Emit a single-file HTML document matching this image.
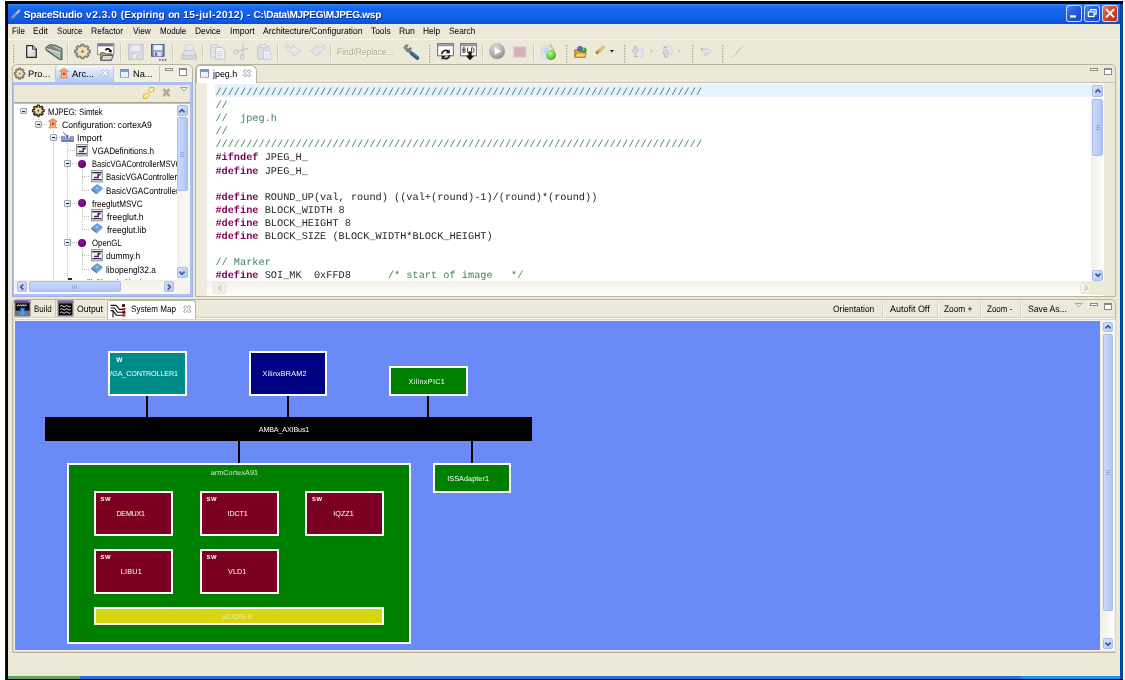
<!DOCTYPE html>
<html><head><meta charset="utf-8"><title>SpaceStudio</title>
<style>
*{box-sizing:border-box;margin:0;padding:0}
html,body{width:1125px;height:680px;overflow:hidden;background:#fff}
body{position:relative;font-family:"Liberation Sans",sans-serif;font-size:8.2px;color:#000;text-rendering:geometricPrecision}
#root{position:absolute;left:0;top:0;width:1125px;height:680px;will-change:transform}
.a{position:absolute}
.t{position:absolute;white-space:pre;line-height:12px;height:12px;transform-origin:0 50%;}
.code{position:absolute;left:215.4px;white-space:pre;font-family:"Liberation Mono",monospace;font-size:10.27px;line-height:13.13px;height:13.13px;color:#262626}
.c{color:#3f7f5f}
.k{color:#7f0055;font-weight:bold}
.bx{position:absolute;border:2px solid #fff}
svg{position:absolute;overflow:visible}
</style></head>
<body><div id="root">
<div class="a" style="left:5px;top:1px;width:1118px;height:679px;background:#000;"></div>
<div class="a" style="left:5px;top:4px;width:1px;height:676px;background:#02285c;"></div>
<div class="a" style="left:1120px;top:4px;width:3px;height:675px;background:#0046a8;"></div>
<div class="a" style="left:8px;top:4px;width:1112px;height:672px;background:#ece9d8;"></div>
<div class="a" style="left:8px;top:676px;width:72px;height:3px;background:#5aa85a;"></div>
<div class="a" style="left:80px;top:676px;width:941px;height:3px;background:#2a6fe0;"></div>
<div class="a" style="left:1021px;top:676px;width:99px;height:3px;background:#1d95e8;"></div>
<div class="a" style="left:8px;top:4px;width:1112px;height:20px;background:linear-gradient(#3a88f2 0%,#1e6ff0 12%,#1463ec 30%,#1261ea 60%,#0f5ae2 82%,#0b4fd2 100%);"></div>
<div class="a" style="left:0;top:0;width:0;height:0;white-space:pre">
<span class="t" style="left:23.75px;top:10.2px;font-size:10.1px;letter-spacing:-0.225px;color:#fff;font-weight:bold;text-shadow:0.7px 0.7px 0 #0a2a80;-webkit-text-stroke:0;">SpaceStudio</span> <span class="t" style="left:86.05px;top:10.2px;font-size:10.1px;letter-spacing:0.537px;color:#fff;font-weight:bold;text-shadow:0.7px 0.7px 0 #0a2a80;-webkit-text-stroke:0;">v2.3.0</span> <span class="t" style="left:120.85px;top:10.2px;font-size:10.1px;letter-spacing:0.003px;color:#fff;font-weight:bold;text-shadow:0.7px 0.7px 0 #0a2a80;-webkit-text-stroke:0;">(Expiring</span> <span class="t" style="left:168.35px;top:10.2px;font-size:10.1px;letter-spacing:-0.820px;color:#fff;font-weight:bold;text-shadow:0.7px 0.7px 0 #0a2a80;-webkit-text-stroke:0;">on</span> <span class="t" style="left:183.35px;top:10.2px;font-size:10.1px;letter-spacing:0.402px;color:#fff;font-weight:bold;text-shadow:0.7px 0.7px 0 #0a2a80;-webkit-text-stroke:0;">15-jul-2012)</span> <span class="t" style="left:247.05px;top:10.2px;font-size:10.1px;letter-spacing:0.537px;color:#fff;font-weight:bold;text-shadow:0.7px 0.7px 0 #0a2a80;-webkit-text-stroke:0;">-</span> <span class="t" style="left:253.55px;top:10.2px;font-size:10.1px;letter-spacing:-0.284px;color:#fff;font-weight:bold;text-shadow:0.7px 0.7px 0 #0a2a80;-webkit-text-stroke:0;">C:\Data\MJPEG\MJPEG.wsp</span> </div>
<div class="a" style="left:1066.3px;top:5.3px;width:16.2px;height:16.4px;border:1px solid rgba(225,235,252,0.85);border-radius:3px;background:linear-gradient(135deg,#4d8cf5 0%,#2a62e0 35%,#1f52d4 70%,#1a45b8 100%)"></div>
<div class="a" style="left:1084.2px;top:5.3px;width:16.2px;height:16.4px;border:1px solid rgba(225,235,252,0.85);border-radius:3px;background:linear-gradient(135deg,#4d8cf5 0%,#2a62e0 35%,#1f52d4 70%,#1a45b8 100%)"></div>
<div class="a" style="left:1102.1px;top:5.3px;width:16.2px;height:16.4px;border:1px solid rgba(225,235,252,0.85);border-radius:3px;background:linear-gradient(135deg,#e9866a 0%,#dc5030 35%,#cf3a1c 70%,#b52c10 100%)"></div>
<svg style="left:1066.3px;top:5.3px" width="16.2" height="16.4"><rect x="4" y="10.3" width="6" height="2.2" fill="#fff"/></svg>
<svg style="left:1084.2px;top:5.3px" width="16.2" height="16.4"><g fill="none" stroke="#fff" stroke-width="1.2"><path d="M6.5 6.3V4.6h5.6v4.6h-1.8"/><rect x="4.3" y="6.9" width="5.8" height="4.6"/></g></svg>
<svg style="left:1102.1px;top:5.3px" width="16.2" height="16.4"><g stroke="#fff" stroke-width="1.9" stroke-linecap="round"><path d="M4.6 4.6l7 7.2M11.6 4.6l-7 7.2"/></g></svg>
<svg style="left:11px;top:8.6px" width="10" height="10"><g stroke-linecap="round"><path d="M1.600 8.200L8.200 1.600" stroke="#9aa3c8" stroke-width="2.600"/><path d="M1.400 8.200L4 5.600" stroke="#7c86ad" stroke-width="1.400"/><path d="M5.600 4.200L8.400 1.400" stroke="#c9cfe6" stroke-width="1.400"/><path d="M4 3.200L6.800 6" stroke="#6f7aa6" stroke-width="0.900"/></g></svg>
<div class="t" style="left:11.85px;top:25px;font-size:9.3px;transform:scaleX(0.8608);">File</div>
<div class="t" style="left:33.45px;top:25px;font-size:9.3px;transform:scaleX(0.9173);">Edit</div>
<div class="t" style="left:56.95px;top:25px;font-size:9.3px;transform:scaleX(0.8688);">Source</div>
<div class="t" style="left:91.45px;top:25px;font-size:9.3px;transform:scaleX(0.9161);">Refactor</div>
<div class="t" style="left:132.95px;top:25px;font-size:9.3px;transform:scaleX(0.8905);">View</div>
<div class="t" style="left:159.65px;top:25px;font-size:9.3px;transform:scaleX(0.8622);">Module</div>
<div class="t" style="left:194.65px;top:25px;font-size:9.3px;transform:scaleX(0.9041);">Device</div>
<div class="t" style="left:229.55px;top:25px;font-size:9.3px;transform:scaleX(0.9372);">Import</div>
<div class="t" style="left:262.85px;top:25px;font-size:9.3px;transform:scaleX(0.9263);">Architecture/Configuration</div>
<div class="t" style="left:371.35px;top:25px;font-size:9.3px;transform:scaleX(0.9028);">Tools</div>
<div class="t" style="left:399.05px;top:25px;font-size:9.3px;transform:scaleX(0.9320);">Run</div>
<div class="t" style="left:423.05px;top:25px;font-size:9.3px;transform:scaleX(0.8993);">Help</div>
<div class="t" style="left:449.05px;top:25px;font-size:9.3px;transform:scaleX(0.8925);">Search</div>
<div class="a" style="left:8px;top:39px;width:1112px;height:1px;background:#f6f5ee;"></div>
<svg style="left:12.8px;top:44.6px" width="2" height="18" viewBox="0 0 2 18"><rect x="0" y="0.00" width="1.2" height="1.2" fill="#9a9787"/><rect x="0" y="2.70" width="1.2" height="1.2" fill="#9a9787"/><rect x="0" y="5.40" width="1.2" height="1.2" fill="#9a9787"/><rect x="0" y="8.10" width="1.2" height="1.2" fill="#9a9787"/><rect x="0" y="10.80" width="1.2" height="1.2" fill="#9a9787"/><rect x="0" y="13.50" width="1.2" height="1.2" fill="#9a9787"/><rect x="0" y="16.20" width="1.2" height="1.2" fill="#9a9787"/></svg>
<svg style="left:429.2px;top:44.6px" width="2" height="18" viewBox="0 0 2 18"><rect x="0" y="0.00" width="1.2" height="1.2" fill="#9a9787"/><rect x="0" y="2.70" width="1.2" height="1.2" fill="#9a9787"/><rect x="0" y="5.40" width="1.2" height="1.2" fill="#9a9787"/><rect x="0" y="8.10" width="1.2" height="1.2" fill="#9a9787"/><rect x="0" y="10.80" width="1.2" height="1.2" fill="#9a9787"/><rect x="0" y="13.50" width="1.2" height="1.2" fill="#9a9787"/><rect x="0" y="16.20" width="1.2" height="1.2" fill="#9a9787"/></svg>
<svg style="left:565.9px;top:44.6px" width="2" height="18" viewBox="0 0 2 18"><rect x="0" y="0.00" width="1.2" height="1.2" fill="#9a9787"/><rect x="0" y="2.70" width="1.2" height="1.2" fill="#9a9787"/><rect x="0" y="5.40" width="1.2" height="1.2" fill="#9a9787"/><rect x="0" y="8.10" width="1.2" height="1.2" fill="#9a9787"/><rect x="0" y="10.80" width="1.2" height="1.2" fill="#9a9787"/><rect x="0" y="13.50" width="1.2" height="1.2" fill="#9a9787"/><rect x="0" y="16.20" width="1.2" height="1.2" fill="#9a9787"/></svg>
<svg style="left:623.8px;top:44.6px" width="2" height="18" viewBox="0 0 2 18"><rect x="0" y="0.00" width="1.2" height="1.2" fill="#9a9787"/><rect x="0" y="2.70" width="1.2" height="1.2" fill="#9a9787"/><rect x="0" y="5.40" width="1.2" height="1.2" fill="#9a9787"/><rect x="0" y="8.10" width="1.2" height="1.2" fill="#9a9787"/><rect x="0" y="10.80" width="1.2" height="1.2" fill="#9a9787"/><rect x="0" y="13.50" width="1.2" height="1.2" fill="#9a9787"/><rect x="0" y="16.20" width="1.2" height="1.2" fill="#9a9787"/></svg>
<svg style="left:691.9px;top:44.6px" width="2" height="18" viewBox="0 0 2 18"><rect x="0" y="0.00" width="1.2" height="1.2" fill="#9a9787"/><rect x="0" y="2.70" width="1.2" height="1.2" fill="#9a9787"/><rect x="0" y="5.40" width="1.2" height="1.2" fill="#9a9787"/><rect x="0" y="8.10" width="1.2" height="1.2" fill="#9a9787"/><rect x="0" y="10.80" width="1.2" height="1.2" fill="#9a9787"/><rect x="0" y="13.50" width="1.2" height="1.2" fill="#9a9787"/><rect x="0" y="16.20" width="1.2" height="1.2" fill="#9a9787"/></svg>
<svg style="left:721.9px;top:44.6px" width="2" height="18" viewBox="0 0 2 18"><rect x="0" y="0.00" width="1.2" height="1.2" fill="#9a9787"/><rect x="0" y="2.70" width="1.2" height="1.2" fill="#9a9787"/><rect x="0" y="5.40" width="1.2" height="1.2" fill="#9a9787"/><rect x="0" y="8.10" width="1.2" height="1.2" fill="#9a9787"/><rect x="0" y="10.80" width="1.2" height="1.2" fill="#9a9787"/><rect x="0" y="13.50" width="1.2" height="1.2" fill="#9a9787"/><rect x="0" y="16.20" width="1.2" height="1.2" fill="#9a9787"/></svg>
<div class="a" style="left:66.80000000000001px;top:42.5px;width:1px;height:19px;background:#d0ccba;"></div>
<div class="a" style="left:67.80000000000001px;top:42.5px;width:1px;height:19px;background:#f5f4ec;"></div>
<div class="a" style="left:119.80000000000001px;top:42.5px;width:1px;height:19px;background:#d0ccba;"></div>
<div class="a" style="left:120.80000000000001px;top:42.5px;width:1px;height:19px;background:#f5f4ec;"></div>
<div class="a" style="left:171.8px;top:42.5px;width:1px;height:19px;background:#d0ccba;"></div>
<div class="a" style="left:172.8px;top:42.5px;width:1px;height:19px;background:#f5f4ec;"></div>
<div class="a" style="left:201.8px;top:42.5px;width:1px;height:19px;background:#d0ccba;"></div>
<div class="a" style="left:202.8px;top:42.5px;width:1px;height:19px;background:#f5f4ec;"></div>
<div class="a" style="left:276.9px;top:42.5px;width:1px;height:19px;background:#d0ccba;"></div>
<div class="a" style="left:277.9px;top:42.5px;width:1px;height:19px;background:#f5f4ec;"></div>
<div class="a" style="left:329.7px;top:42.5px;width:1px;height:19px;background:#d0ccba;"></div>
<div class="a" style="left:330.7px;top:42.5px;width:1px;height:19px;background:#f5f4ec;"></div>
<div class="a" style="left:481.79999999999995px;top:42.5px;width:1px;height:19px;background:#d0ccba;"></div>
<div class="a" style="left:482.79999999999995px;top:42.5px;width:1px;height:19px;background:#f5f4ec;"></div>
<div class="a" style="left:532.8px;top:42.5px;width:1px;height:19px;background:#d0ccba;"></div>
<div class="a" style="left:533.8px;top:42.5px;width:1px;height:19px;background:#f5f4ec;"></div>
<svg style="left:25.6px;top:44.6px" width="11" height="13.4" viewBox="0 0 11 13.4"><defs><linearGradient id="gnew" x1="0" y1="0" x2="1" y2="1"><stop offset="0" stop-color="#fff"/><stop offset="1" stop-color="#c9c9cf"/></linearGradient></defs><path d="M0.7 0.7H6.6L10.3 4.2V12.4H0.7Z" fill="url(#gnew)" stroke="#2b2b33" stroke-width="1.3" stroke-linejoin="round"/><path d="M6.6 0.7V4.2H10.3" fill="#e6e6ea" stroke="#2b2b33" stroke-width="1"/></svg>
<svg style="left:44.6px;top:43.6px" width="17.6" height="16.2" viewBox="0 0 17.6 16.2"><path d="M0.900 4.400Q0.600 3.400 1.600 3L5.200 0.800Q6 0.400 6.800 0.800L8.400 1.600L9.600 1L16.400 4.200Q17 4.600 17 5.400V14.800Q17 15.800 16 15.600L14.400 15.200L1.600 6.200Q1 5.600 0.900 4.400Z" fill="#a9c7b0" stroke="#4a574d" stroke-width="1.100" stroke-linejoin="round"/><path d="M2 3.600L6 1.600L16 6.400V8.200L2.400 4.800Z" fill="#877f8c"/><path d="M2.400 5L15.600 9" fill="none" stroke="#dfeee2" stroke-width="0.900"/><path d="M15.800 8.600V14.800" stroke="#6d8473" stroke-width="1.300"/></svg>
<svg style="left:74.3px;top:44.1px" width="17" height="15" viewBox="0 0 17 15"><defs><radialGradient id="ggear" cx="0.5" cy="0.5" r="0.5"><stop offset="0" stop-color="#f6d25c"/><stop offset="0.32" stop-color="#f3dc8c"/><stop offset="0.5" stop-color="#ebe6d4"/><stop offset="1" stop-color="#dad6c6"/></radialGradient></defs><polygon points="7.20,0.70 9.80,0.70 10.12,2.32 11.45,2.81 12.95,1.87 14.79,3.52 13.73,4.86 14.28,6.05 16.09,6.33 16.09,8.67 14.28,8.95 13.73,10.14 14.79,11.48 12.95,13.13 11.45,12.19 10.12,12.68 9.80,14.30 7.20,14.30 6.88,12.68 5.55,12.19 4.05,13.13 2.21,11.48 3.27,10.14 2.72,8.95 0.91,8.67 0.91,6.33 2.72,6.05 3.27,4.86 2.21,3.52 4.05,1.87 5.55,2.81 6.88,2.32" fill="url(#ggear)" stroke="#878372" stroke-width="1.700" stroke-linejoin="round"/><circle cx="8.500" cy="7.500" r="1" fill="#5b4a25"/></svg>
<svg style="left:97.4px;top:42.8px" width="17.6" height="18" viewBox="0 0 17.6 18"><rect x="0.600" y="0.600" width="16.200" height="10.800" fill="#fff" stroke="#8d8d95" stroke-width="1.100"/><rect x="1.100" y="1.100" width="15.200" height="2.200" fill="#7d6c9a"/><path d="M7.800 6.800c1.400-2.600 5-2.600 6 0.400l1.400-0.400l-1 3l-3-1.600l1.200-0.400c-0.800-1.600-2.400-1.400-3.200 0z" fill="#111"/><path d="M3.800 17.200V9.800h3.600l1 1.200h6v6.200z" fill="#cdb78a" stroke="#5e4e2c" stroke-width="1"/><path d="M3.800 17.200l2-4.800h10.400l-1.800 4.800z" fill="#d9d9de" stroke="#56505a" stroke-width="1"/></svg>
<svg style="left:128px;top:44.3px" width="15.6" height="16" viewBox="0 0 15.6 16"><rect x="0.6" y="0.6" width="14.4" height="14.8" fill="#dcdce4" stroke="#c3c3cf" stroke-width="1.1"/><rect x="3" y="1" width="9.4" height="6.4" fill="#eeeef3" stroke="#cfcfda" stroke-width="0.8"/><rect x="4" y="9.6" width="7.6" height="5.6" fill="#e9e9ef" stroke="#cbcbd6" stroke-width="0.8"/><rect x="8" y="11" width="2.2" height="3.4" fill="#d1d1da"/></svg>
<svg style="left:151px;top:44.3px" width="13.6" height="12.8" viewBox="0 0 13.6 12.8"><rect x="0.600" y="0.600" width="12.400" height="11.600" fill="#7f97cc" stroke="#3f55a0" stroke-width="1.100"/><rect x="2.400" y="1" width="8.800" height="5.200" fill="#f4f6fb" stroke="#a9b9dd" stroke-width="0.600"/><rect x="3" y="7.800" width="7.600" height="4.400" fill="#dfe5f2"/><rect x="4" y="8.600" width="2.200" height="3.200" fill="#4f6db2"/></svg>
<svg style="left:159px;top:58.6px" width="8" height="2" viewBox="0 0 8 2"><rect x="0.2" y="0.2" width="1.4" height="1.4" fill="#2b3d6a"/><rect x="3" y="0.2" width="1.4" height="1.4" fill="#2b3d6a"/><rect x="5.8" y="0.2" width="1.4" height="1.4" fill="#2b3d6a"/></svg>
<svg style="left:180.8px;top:44.3px" width="16.2" height="16" viewBox="0 0 16.2 16"><path d="M4.2 6.6V0.8h5.6l2.4 2.4v3.4z" fill="#f1f1f4" stroke="#c9c9d3" stroke-width="1"/><path d="M5.6 3h4M5.6 4.8h5" stroke="#d7d7df" stroke-width="0.8"/><path d="M1.4 11.4l2-4.8h9.6l2 4.8z" fill="#e3e3ea" stroke="#c6c6d0" stroke-width="1"/><rect x="0.8" y="11.2" width="14.6" height="4" fill="#d4d4dd" stroke="#c2c2cd" stroke-width="0.9"/></svg>
<svg style="left:210.2px;top:44.3px" width="15.8" height="16" viewBox="0 0 15.8 16"><path d="M0.8 0.8h6l2 2v10.4h-8z" fill="#ececf1" stroke="#c4c4cf" stroke-width="1"/><path d="M2 3.4h4M2 5.4h4M2 7.4h4M2 9.4h4" stroke="#d0d0da" stroke-width="0.8"/><path d="M5.6 3.4h6.6l2.6 2.6v9.2H5.6z" fill="#f3f3f6" stroke="#c4c4cf" stroke-width="1"/><path d="M7.2 7.4h5.8M7.2 9.4h5.8M7.2 11.4h5.8M7.2 13.2h4" stroke="#cfcfd9" stroke-width="0.8"/></svg>
<svg style="left:232.8px;top:44.3px" width="15.6" height="16" viewBox="0 0 15.6 16"><g fill="none" stroke="#c3c5cc" stroke-width="1.2"><circle cx="2.8" cy="8" r="2.2"/><ellipse cx="9.2" cy="13" rx="1.7" ry="2.4"/><path d="M4.8 7.4L15 4.4M9.4 10.6L10.4 0.6"/></g></svg>
<svg style="left:257.2px;top:44.3px" width="14.6" height="16" viewBox="0 0 14.6 16"><rect x="0.7" y="2.2" width="11.6" height="13" rx="1" fill="#dddde3" stroke="#c5c5cf" stroke-width="1"/><rect x="3.2" y="0.6" width="6.4" height="3.2" rx="0.8" fill="#e9e9ee" stroke="#c2c2cc" stroke-width="0.9"/><path d="M6.4 6.8h5.4l2 2v6.4H6.4z" fill="#f4f6fa" stroke="#c4c8d4" stroke-width="0.9"/><path d="M7.8 10.2h4.4M7.8 12h4.4M7.8 13.6h4.4" stroke="#cfd6e4" stroke-width="0.8"/></svg>
<svg style="left:285px;top:44.3px" width="16.8" height="15" viewBox="0 0 16.8 15"><path d="M1 1.2c0.4 4.6 2 7 6.6 7.2V12.4l8.2-5.6L7.6 1.2v3C4.6 4 3.4 3 3.2 0.8z" fill="#e6e6ea" stroke="#cdcdd6" stroke-width="1" stroke-linejoin="round"/></svg>
<svg style="left:309.4px;top:44.3px" width="16.8" height="15" viewBox="0 0 16.8 15"><path d="M15.8 1.2c-0.4 4.6-2 7-6.6 7.2V12.4L1 6.8L9.2 1.2v3c3 -0.2 4.200-1.200 4.400-3.400z" fill="#e6e6ea" stroke="#cdcdd6" stroke-width="1" stroke-linejoin="round"/></svg>
<div class="t" style="left:337.15px;top:46px;font-size:9.3px;transform:scaleX(0.9065);color:#aeab9c;text-shadow:0.7px 0.7px 0 #fbfaf5;-webkit-text-stroke:0">Find/Replace...</div>
<svg style="left:403px;top:43.6px" width="17" height="16.4" viewBox="0 0 17 16.4"><path d="M0.8 3.4L3 1l2.2 0.200l-1.600 1.800l0.600 1.600l1.800 0.400l1.600-1.800l0.600 2.200l-2 2.400l-2.200-0.200z" fill="#9a9a9e" stroke="#55555b" stroke-width="0.8" stroke-linejoin="round"/><path d="M5.400 6.200L8.400 9.400" stroke="#77777d" stroke-width="2.4" stroke-linecap="round"/><path d="M8.600 9.200L14.400 14" stroke="#2f5f8d" stroke-width="3.800" stroke-linecap="round"/><path d="M9 8.600L14.200 12.800" stroke="#5d8fbd" stroke-width="1" stroke-linecap="round"/></svg>
<svg style="left:437px;top:43.2px" width="17" height="17.2" viewBox="0 0 17 17.2"><rect x="0.600" y="0.600" width="15.800" height="12.200" fill="#fff" stroke="#77777d" stroke-width="1.100"/><rect x="1.100" y="1.100" width="14.800" height="2.200" fill="#96969c"/><g fill="none" stroke="#1c1c1c" stroke-width="1.700"><path d="M4.800 11.200a3.900 3.900 0 0 1 6.600-2.600"/><path d="M12.600 12a3.900 3.900 0 0 1-6.600 2.600"/></g><path d="M12.800 6.200v4h-4z" fill="#1c1c1c"/><path d="M4.600 17v-4h4z" fill="#1c1c1c"/></svg>
<svg style="left:460px;top:43.2px" width="17" height="17.2" viewBox="0 0 17 17.2"><rect x="0.600" y="0.600" width="15.800" height="12.200" fill="#fff" stroke="#77777d" stroke-width="1.100"/><rect x="1.100" y="1.100" width="14.800" height="2.200" fill="#96969c"/><g fill="none" stroke="#2a2a2a" stroke-width="0.900"><path d="M3 4.800v4.800h1.400c1.200 0 1.200-2.400 0-2.400H3M3 7.200h1.400c1 0 1-2.400 0-2.400H3"/><path d="M7.600 4.600v5h2.200"/><path d="M11.600 4.800v4.800h1c2 0 2-4.800 0-4.800z"/></g><path d="M8.400 8.400h3.200v4.400h2.600l-4.200 4.400l-4.200-4.400h2.600z" fill="#161616"/></svg>
<svg style="left:488.6px;top:43.2px" width="16.4" height="16.6" viewBox="0 0 16.4 16.6"><defs><radialGradient id="gpl" cx="0.4" cy="0.3" r="0.8"><stop offset="0" stop-color="#e2e2e2"/><stop offset="0.6" stop-color="#a9a9a9"/><stop offset="1" stop-color="#7d7d7d"/></radialGradient></defs><circle cx="8.200" cy="8.300" r="7.800" fill="url(#gpl)" stroke="#bdbdbd" stroke-width="0.600"/><path d="M5.800 4.600L12.200 8.300L5.800 12z" fill="#fbfbfb"/></svg>
<svg style="left:512.6px;top:45.8px" width="13.6" height="12" viewBox="0 0 13.6 12"><rect x="0.600" y="0.600" width="12.400" height="10.800" fill="#d8b1b8" stroke="#e4cfd2" stroke-width="1.200"/></svg>
<svg style="left:541.2px;top:43.6px" width="15.4" height="16.2" viewBox="0 0 15.4 16.2"><defs><radialGradient id="ggr" cx="0.4" cy="0.35" r="0.7"><stop offset="0" stop-color="#c9f59b"/><stop offset="0.55" stop-color="#6fd04a"/><stop offset="1" stop-color="#3c9a2a"/></radialGradient></defs><path d="M0.800 2.200h8l2.400 2.400v10.400H0.800z" fill="#dfe7f5" stroke="#c9d3e6" stroke-width="0.900"/><path d="M2.400 4.800h5M2.400 6.600h4M2.400 8.400h3" stroke="#a9bfe6" stroke-width="0.900"/><path d="M9.400 0.800l3.400 5.600" stroke="#e9b48c" stroke-width="1.800" stroke-linecap="round"/><circle cx="10" cy="11" r="5" fill="url(#ggr)"/></svg>
<svg style="left:573.8px;top:45.8px" width="13.2" height="12" viewBox="0 0 13.2 12"><path d="M0.800 11.200V3.800h3.600l1 1.200h6v6.200z" fill="#e8a33a" stroke="#a86a18" stroke-width="0.900"/><path d="M0.800 11.200l1.800-4.200h9.800l-1.600 4.200z" fill="#f6d26a" stroke="#b07a20" stroke-width="0.800"/><circle cx="6" cy="2.800" r="2.700" fill="#5a4fa8"/><circle cx="5.400" cy="2.200" r="1" fill="#9d95d8"/><circle cx="10" cy="4.200" r="2.700" fill="#3f9a3a"/><circle cx="9.400" cy="3.600" r="1" fill="#8fd487"/></svg>
<svg style="left:592.4px;top:45.8px" width="13.2" height="12" viewBox="0 0 13.2 12"><path d="M1 10.800L4.800 6.400" stroke="#f3f0b8" stroke-width="3.200" stroke-linecap="round"/><path d="M4.200 7.600L7.400 4.400" stroke="#8d8576" stroke-width="3"/><path d="M7 5L11.200 1.400" stroke="#e8b04a" stroke-width="3" stroke-linecap="round"/><path d="M8.400 3.600L10.800 1.600" stroke="#f7dc94" stroke-width="1" stroke-linecap="round"/></svg>
<svg style="left:609.5px;top:50px" width="4" height="3" viewBox="0 0 4 3"><path d="M0 0h3.800L1.900 2.600z" fill="#111"/></svg>
<svg style="left:632.4px;top:46.3px" width="11.8" height="11.6" viewBox="0 0 11.8 11.6"><rect x="3.600" y="2.800" width="7.600" height="8" fill="#e3e6ec" stroke="#d0d3db" stroke-width="0.800"/><path d="M1.800 0.400h2.800v4.200h1.800l-3.200 4.200l-3.200-4.200h1.800z" fill="#dcdcdc" stroke="#b9b9b9" stroke-width="0.800"/><rect x="2.600" y="9.800" width="2" height="1.200" fill="#9aa6b3"/></svg>
<svg style="left:650px;top:50.2px" width="3.2" height="2.2" viewBox="0 0 3.2 2.2"><path d="M0 0h3L1.500 2z" fill="#bdbab0"/></svg>
<svg style="left:661.5px;top:46.3px" width="10.6" height="11.6" viewBox="0 0 10.6 11.6"><rect x="1.600" y="0.600" width="8.400" height="8" fill="#e3e6ec" stroke="#d0d3db" stroke-width="0.800"/><path d="M2 11.200h2.800v-4.200h1.800l-3.200-4.200l-3.200 4.200h1.800z" fill="#dcdcdc" stroke="#b9b9b9" stroke-width="0.800" transform="translate(0.600 0)"/><rect x="2.400" y="0.800" width="2" height="1.200" fill="#9aa6b3"/></svg>
<svg style="left:677.8px;top:50.2px" width="3.2" height="2.2" viewBox="0 0 3.2 2.2"><path d="M0 0h3L1.500 2z" fill="#bdbab0"/></svg>
<svg style="left:700px;top:46.8px" width="12" height="9.4" viewBox="0 0 12 9.4"><path d="M0.800 3.200L4.400 0.600v1.800h3.200v-1.200l3.800 3l-3.800 3v-1.200H6.400v2.800H4.400v-2.800z" fill="#e3e3e8" stroke="#c4c4cc" stroke-width="0.800" stroke-linejoin="round"/><circle cx="2" cy="2" r="1" fill="#a9a9b2"/></svg>
<svg style="left:730.4px;top:46.4px" width="13" height="10.8" viewBox="0 0 13 10.8"><path d="M0.600 10.200h4.200L12.400 0.600c-2.800 1.600-5.800 4.800-7.600 9.600" fill="#dadae0" stroke="#c9c9d1" stroke-width="0.800" stroke-linejoin="round"/></svg>
<div class="a" style="left:11.7px;top:64px;width:180.9px;height:232.8px;border:1px solid #b9b5a2;border-radius:5px 5px 0 0;background:#f1efe4"></div>
<div class="a" style="left:11.7px;top:82.1px;width:180.9px;height:214.70000000000002px;background:#adc1ec;border:1px solid #9fb3e0;border-top:0"></div>
<div class="a" style="left:13.8px;top:84.6px;width:176.4px;height:17.7px;background:#ece9d8;"></div>
<div class="a" style="left:13.8px;top:102.4px;width:176.4px;height:1px;background:#a8a69a;"></div>
<div class="a" style="left:13.8px;top:103.6px;width:176.4px;height:190.6px;background:#fff;"></div>
<div class="a" style="left:55px;top:65.5px;width:59.4px;height:16.8px;background:linear-gradient(#f4f7fd 0%,#d9e5fa 35%,#b4cbf5 100%);border-left:1px solid #b9c7e6;border-right:1px solid #b9c7e6;border-radius:3px 3px 0 0"></div>
<div class="a" style="left:158.6px;top:65.5px;width:1px;height:16.6px;background:#c9c5b2;"></div>
<div class="t" style="left:28.45px;top:68px;font-size:9.3px;transform:scaleX(1.0034);">Pro...</div>
<div class="t" style="left:72.05px;top:68px;font-size:9.3px;transform:scaleX(1.0091);">Arc...</div>
<div class="t" style="left:133.05px;top:68px;font-size:9.3px;transform:scaleX(0.9980);">Na...</div>
<svg style="left:14.4px;top:67.6px" width="11.4" height="11.4" viewBox="0 0 11.4 11.4"><polygon points="7.01,0.40 9.59,0.40 9.81,2.28 11.06,2.75 12.69,1.57 14.51,3.22 13.20,4.70 13.72,5.82 15.79,6.03 15.79,8.37 13.72,8.58 13.20,9.70 14.51,11.18 12.69,12.83 11.06,11.65 9.81,12.12 9.59,14.00 7.01,14.00 6.79,12.12 5.54,11.65 3.91,12.83 2.09,11.18 3.40,9.70 2.88,8.58 0.81,8.37 0.81,6.03 2.88,5.82 3.40,4.70 2.09,3.22 3.91,1.57 5.54,2.75 6.79,2.28" transform="scale(0.68 0.78)" fill="#ece8d8" stroke="#7f796a" stroke-width="2" stroke-linejoin="round"/><circle cx="5.600" cy="5.600" r="1.700" fill="#f0c95a"/><circle cx="5.600" cy="5.600" r="0.700" fill="#5a4a2a"/></svg>
<svg style="left:58.6px;top:67.6px" width="9.8" height="10.6" viewBox="0 0 9.8 10.6"><path d="M0.400 3.400L4.900 0.400L9.400 3.400z" fill="#f0a070" stroke="#d9783e" stroke-width="0.700"/><rect x="1.400" y="3.800" width="7" height="5" fill="#f6c9a4"/><rect x="2" y="4" width="1.300" height="4.800" fill="#e8854a"/><rect x="6.500" y="4" width="1.300" height="4.800" fill="#e8854a"/><rect x="3.900" y="4.600" width="2" height="2.600" fill="#c03a20"/><rect x="0.400" y="8.800" width="9" height="1.500" fill="#e89a62"/></svg>
<svg style="left:120.4px;top:68.8px" width="9" height="8.6" viewBox="0 0 9 8.6"><rect x="0.500" y="0.500" width="8" height="7.6" fill="#fff" stroke="#7f91b3" stroke-width="1"/><rect x="1" y="1" width="7" height="2" fill="#6f9be0"/><rect x="1" y="3" width="7" height="4.6" fill="#eaf3fb"/></svg>
<svg style="left:100.7px;top:69.4px" width="8.4" height="8.4" viewBox="0 0 8.4 8.4"><path d="M0.600 2.200L2.200 0.600L4.200 2.600L6.200 0.600L7.800 2.200L5.800 4.200L7.800 6.200L6.200 7.800L4.200 5.800L2.200 7.800L0.600 6.200L2.600 4.200z" fill="#f7f9fd" stroke="#9aa9c9" stroke-width="0.900" stroke-linejoin="round"/></svg>
<div class="a" style="left:165.3px;top:68.1px;width:8px;height:2.8px;border:1px solid #8a8a82;background:#fff"></div>
<div class="a" style="left:179.1px;top:68.1px;width:8px;height:7.6px;border:1px solid #8a8a82;border-top-width:2px;background:#fff"></div>
<svg style="left:142.8px;top:87.2px" width="11.4" height="11.8" viewBox="0 0 11.4 11.8"><g fill="#fdf2ad" stroke="#d4aa26" stroke-width="0.900" stroke-linejoin="round"><path d="M5.200 3.400L7.600 1L7.200 0.400L11 0.600L10.600 4.400L10 3.600L7.400 6.200L6.600 4.600Z"/><path d="M6.200 8.400L3.800 10.800L4.200 11.400L0.400 11.200L0.800 7.400L1.400 8.200L4 5.600L4.800 7.200Z"/></g></svg>
<svg style="left:162.4px;top:88.1px" width="8.8" height="9.2" viewBox="0 0 8.8 9.2"><path d="M0.800 2.200L2.600 0.600L4.400 3L6.200 0.600L8 2.200L5.900 4.600L8 7L6.200 8.600L4.400 6.200L2.600 8.600L0.800 7L2.900 4.600z" fill="#aeab9a" stroke="#a5a291" stroke-width="0.600" stroke-linejoin="round"/></svg>
<svg style="left:179.6px;top:87.2px" width="8" height="4.6" viewBox="0 0 8 4.6"><path d="M0.600 0.500h6.800L4 4z" fill="#f6f5ee" stroke="#8f8c7f" stroke-width="0.800"/></svg>
<div class="a" style="left:13.8px;top:103.6px;width:162.8px;height:176.4px;overflow:hidden"><div class="a" style="left:-13.8px;top:-103.6px">
<div class="a" style="left:38px;top:117px;width:1px;height:3px;background:repeating-linear-gradient(#bdbdbd 0,#bdbdbd 1px,transparent 1px,transparent 2px);"></div>
<div class="a" style="left:53px;top:130px;width:1px;height:3px;background:repeating-linear-gradient(#bdbdbd 0,#bdbdbd 1px,transparent 1px,transparent 2px);"></div>
<div class="a" style="left:42px;top:124px;width:5px;height:1px;background:repeating-linear-gradient(90deg,#bdbdbd 0,#bdbdbd 1px,transparent 1px,transparent 2px);"></div>
<div class="a" style="left:53px;top:141px;width:1px;height:154px;background:repeating-linear-gradient(#bdbdbd 0,#bdbdbd 1px,transparent 1px,transparent 2px);"></div>
<div class="a" style="left:57px;top:137px;width:4px;height:1px;background:repeating-linear-gradient(90deg,#bdbdbd 0,#bdbdbd 1px,transparent 1px,transparent 2px);"></div>
<div class="a" style="left:67px;top:143px;width:1px;height:152px;background:repeating-linear-gradient(#bdbdbd 0,#bdbdbd 1px,transparent 1px,transparent 2px);"></div>
<div class="a" style="left:68px;top:150px;width:8px;height:1px;background:repeating-linear-gradient(90deg,#bdbdbd 0,#bdbdbd 1px,transparent 1px,transparent 2px);"></div>
<div class="a" style="left:72px;top:163px;width:6px;height:1px;background:repeating-linear-gradient(90deg,#bdbdbd 0,#bdbdbd 1px,transparent 1px,transparent 2px);"></div>
<div class="a" style="left:72px;top:203px;width:6px;height:1px;background:repeating-linear-gradient(90deg,#bdbdbd 0,#bdbdbd 1px,transparent 1px,transparent 2px);"></div>
<div class="a" style="left:72px;top:242px;width:6px;height:1px;background:repeating-linear-gradient(90deg,#bdbdbd 0,#bdbdbd 1px,transparent 1px,transparent 2px);"></div>
<div class="a" style="left:82px;top:169px;width:1px;height:21px;background:repeating-linear-gradient(#bdbdbd 0,#bdbdbd 1px,transparent 1px,transparent 2px);"></div>
<div class="a" style="left:82px;top:176px;width:8px;height:1px;background:repeating-linear-gradient(90deg,#bdbdbd 0,#bdbdbd 1px,transparent 1px,transparent 2px);"></div>
<div class="a" style="left:82px;top:190px;width:8px;height:1px;background:repeating-linear-gradient(90deg,#bdbdbd 0,#bdbdbd 1px,transparent 1px,transparent 2px);"></div>
<div class="a" style="left:82px;top:208px;width:1px;height:21px;background:repeating-linear-gradient(#bdbdbd 0,#bdbdbd 1px,transparent 1px,transparent 2px);"></div>
<div class="a" style="left:82px;top:216px;width:8px;height:1px;background:repeating-linear-gradient(90deg,#bdbdbd 0,#bdbdbd 1px,transparent 1px,transparent 2px);"></div>
<div class="a" style="left:82px;top:229px;width:8px;height:1px;background:repeating-linear-gradient(90deg,#bdbdbd 0,#bdbdbd 1px,transparent 1px,transparent 2px);"></div>
<div class="a" style="left:82px;top:248px;width:1px;height:21px;background:repeating-linear-gradient(#bdbdbd 0,#bdbdbd 1px,transparent 1px,transparent 2px);"></div>
<div class="a" style="left:82px;top:255px;width:8px;height:1px;background:repeating-linear-gradient(90deg,#bdbdbd 0,#bdbdbd 1px,transparent 1px,transparent 2px);"></div>
<div class="a" style="left:82px;top:269px;width:8px;height:1px;background:repeating-linear-gradient(90deg,#bdbdbd 0,#bdbdbd 1px,transparent 1px,transparent 2px);"></div>
<div class="a" style="left:20.4px;top:107.60px;width:6.8px;height:6.8px;border:1px solid #9aa3b5;border-radius:1px;background:linear-gradient(135deg,#fff,#d4d2c6)"></div>
<div class="a" style="left:22.099999999999998px;top:110.55px;width:3.4px;height:0.9px;background:#222;"></div>
<div class="a" style="left:35.1px;top:120.77px;width:6.8px;height:6.8px;border:1px solid #9aa3b5;border-radius:1px;background:linear-gradient(135deg,#fff,#d4d2c6)"></div>
<div class="a" style="left:36.800000000000004px;top:123.72px;width:3.4px;height:0.9px;background:#222;"></div>
<div class="a" style="left:49.9px;top:133.94px;width:6.8px;height:6.8px;border:1px solid #9aa3b5;border-radius:1px;background:linear-gradient(135deg,#fff,#d4d2c6)"></div>
<div class="a" style="left:51.6px;top:136.89px;width:3.4px;height:0.9px;background:#222;"></div>
<div class="a" style="left:64.4px;top:160.28px;width:6.8px;height:6.8px;border:1px solid #9aa3b5;border-radius:1px;background:linear-gradient(135deg,#fff,#d4d2c6)"></div>
<div class="a" style="left:66.10000000000001px;top:163.23px;width:3.4px;height:0.9px;background:#222;"></div>
<div class="a" style="left:64.4px;top:199.79px;width:6.8px;height:6.8px;border:1px solid #9aa3b5;border-radius:1px;background:linear-gradient(135deg,#fff,#d4d2c6)"></div>
<div class="a" style="left:66.10000000000001px;top:202.74px;width:3.4px;height:0.9px;background:#222;"></div>
<div class="a" style="left:64.4px;top:239.30px;width:6.8px;height:6.8px;border:1px solid #9aa3b5;border-radius:1px;background:linear-gradient(135deg,#fff,#d4d2c6)"></div>
<div class="a" style="left:66.10000000000001px;top:242.25px;width:3.4px;height:0.9px;background:#222;"></div>
<svg style="left:32px;top:105px" width="12.6" height="11.4" viewBox="0 0 12.6 11.4"><polygon points="7.01,0.40 9.59,0.40 9.81,2.28 11.06,2.75 12.69,1.57 14.51,3.22 13.20,4.70 13.72,5.82 15.79,6.03 15.79,8.37 13.72,8.58 13.20,9.70 14.51,11.18 12.69,12.83 11.06,11.65 9.81,12.12 9.59,14.00 7.01,14.00 6.79,12.12 5.54,11.65 3.91,12.83 2.09,11.18 3.40,9.70 2.88,8.58 0.81,8.37 0.81,6.03 2.88,5.82 3.40,4.70 2.09,3.22 3.91,1.57 5.54,2.75 6.79,2.28" transform="scale(0.76 0.79)" fill="#e8d9a8" stroke="#3a2f1c" stroke-width="1.900" stroke-linejoin="round"/><circle cx="6.300" cy="5.700" r="1.800" fill="#f2c64e"/><circle cx="6.300" cy="5.700" r="0.800" fill="#3a2f1c"/></svg>
<svg style="left:48px;top:117.97px" width="9.8" height="10.6" viewBox="0 0 9.8 10.6"><path d="M0.400 3.400L4.900 0.400L9.400 3.400z" fill="#f0a070" stroke="#d9783e" stroke-width="0.700"/><rect x="1.400" y="3.800" width="7" height="5" fill="#f6c9a4"/><rect x="2" y="4" width="1.300" height="4.800" fill="#e8854a"/><rect x="6.500" y="4" width="1.300" height="4.800" fill="#e8854a"/><rect x="3.900" y="4.600" width="2" height="2.600" fill="#c03a20"/><rect x="0.400" y="8.800" width="9" height="1.500" fill="#e89a62"/></svg>
<svg style="left:60.9px;top:131.74px" width="13" height="10" viewBox="0 0 13 10"><path d="M0.600 9.400V4.400h3.200v2h5.400v-2h3.200v5z" fill="#8fa6d2" stroke="#5f78ad" stroke-width="0.800"/><rect x="0.600" y="8.200" width="11.800" height="1.400" fill="#5f78ad"/><path d="M2.200 0.400L6.600 4.600" stroke="#3a4a6a" stroke-width="0.900"/><path d="M7.200 2.600v2.800h-2.800z" fill="#2a3a5a"/></svg>
<svg style="left:76.3px;top:143.60999999999999px" width="12" height="12.4" viewBox="0 0 12 12.4"><rect x="0.600" y="0.600" width="10.800" height="11.200" fill="#fbfbfb" stroke="#9b9b9b" stroke-width="1.200"/><rect x="1.400" y="2" width="9.200" height="1.400" fill="#2c2438"/><rect x="1.400" y="9" width="9.200" height="1.400" fill="#4a2a5c"/><path d="M3 7.600h4.200V4.800h2.400" fill="none" stroke="#4a2466" stroke-width="1.500"/><rect x="1.400" y="10.300" width="9.200" height="0.900" fill="#c9c9c9"/></svg>
<div class="a" style="left:78.3px;top:159.78px;width:7.8px;height:7.8px;border-radius:50%;background:radial-gradient(circle at 40% 35%,#8a1a92,#6b0073 60%,#5a0062)"></div>
<svg style="left:90.8px;top:169.95px" width="12" height="12.4" viewBox="0 0 12 12.4"><rect x="0.600" y="0.600" width="10.800" height="11.200" fill="#fbfbfb" stroke="#9b9b9b" stroke-width="1.200"/><rect x="1.400" y="2" width="9.200" height="1.400" fill="#2c2438"/><rect x="1.400" y="9" width="9.200" height="1.400" fill="#4a2a5c"/><path d="M3 7.600h4.200V4.800h2.400" fill="none" stroke="#4a2466" stroke-width="1.500"/><rect x="1.400" y="10.300" width="9.200" height="0.900" fill="#c9c9c9"/></svg>
<svg style="left:90.8px;top:183.82px" width="12" height="10.8" viewBox="0 0 12 10.8"><path d="M0.500 5L6.200 0.500L11.500 4.200L5.800 9z" fill="#6aa2d6" stroke="#4a86c0" stroke-width="0.700" stroke-linejoin="round"/><path d="M0.500 5L5.800 9V10.400L0.500 6.400z" fill="#3d74ad"/><path d="M5.800 9L11.500 4.200V5.600L5.800 10.400z" fill="#8fbce6"/><path d="M5 3.400l2 1.200" stroke="#d6e9f8" stroke-width="1"/></svg>
<div class="a" style="left:78.3px;top:199.29px;width:7.8px;height:7.8px;border-radius:50%;background:radial-gradient(circle at 40% 35%,#8a1a92,#6b0073 60%,#5a0062)"></div>
<svg style="left:90.8px;top:209.46px" width="12" height="12.4" viewBox="0 0 12 12.4"><rect x="0.600" y="0.600" width="10.800" height="11.200" fill="#fbfbfb" stroke="#9b9b9b" stroke-width="1.200"/><rect x="1.400" y="2" width="9.200" height="1.400" fill="#2c2438"/><rect x="1.400" y="9" width="9.200" height="1.400" fill="#4a2a5c"/><path d="M3 7.600h4.200V4.800h2.400" fill="none" stroke="#4a2466" stroke-width="1.500"/><rect x="1.400" y="10.300" width="9.200" height="0.900" fill="#c9c9c9"/></svg>
<svg style="left:90.8px;top:223.33px" width="12" height="10.8" viewBox="0 0 12 10.8"><path d="M0.500 5L6.200 0.500L11.500 4.200L5.800 9z" fill="#6aa2d6" stroke="#4a86c0" stroke-width="0.700" stroke-linejoin="round"/><path d="M0.500 5L5.800 9V10.400L0.500 6.400z" fill="#3d74ad"/><path d="M5.800 9L11.500 4.200V5.600L5.800 10.400z" fill="#8fbce6"/><path d="M5 3.400l2 1.200" stroke="#d6e9f8" stroke-width="1"/></svg>
<div class="a" style="left:78.3px;top:238.80px;width:7.8px;height:7.8px;border-radius:50%;background:radial-gradient(circle at 40% 35%,#8a1a92,#6b0073 60%,#5a0062)"></div>
<svg style="left:90.8px;top:248.97px" width="12" height="12.4" viewBox="0 0 12 12.4"><rect x="0.600" y="0.600" width="10.800" height="11.200" fill="#fbfbfb" stroke="#9b9b9b" stroke-width="1.200"/><rect x="1.400" y="2" width="9.200" height="1.400" fill="#2c2438"/><rect x="1.400" y="9" width="9.200" height="1.400" fill="#4a2a5c"/><path d="M3 7.600h4.200V4.800h2.400" fill="none" stroke="#4a2466" stroke-width="1.500"/><rect x="1.400" y="10.300" width="9.200" height="0.900" fill="#c9c9c9"/></svg>
<svg style="left:90.8px;top:262.84px" width="12" height="10.8" viewBox="0 0 12 10.8"><path d="M0.500 5L6.200 0.500L11.500 4.200L5.800 9z" fill="#6aa2d6" stroke="#4a86c0" stroke-width="0.700" stroke-linejoin="round"/><path d="M0.500 5L5.800 9V10.400L0.500 6.400z" fill="#3d74ad"/><path d="M5.800 9L11.500 4.200V5.600L5.800 10.400z" fill="#8fbce6"/><path d="M5 3.400l2 1.200" stroke="#d6e9f8" stroke-width="1"/></svg>
<div class="a" style="left:67.6px;top:278.4px;width:4.8px;height:3px;background:#2a2a2a;"></div>
<div class="t" style="left:47.65px;top:106px;font-size:9.3px;transform:scaleX(0.8335);">MJPEG: Simtek</div>
<div class="t" style="left:62.45px;top:119px;font-size:9.3px;transform:scaleX(0.9240);">Configuration: cortexA9</div>
<div class="t" style="left:76.85px;top:132px;font-size:9.3px;transform:scaleX(0.9485);">Import</div>
<div class="t" style="left:91.65px;top:145px;font-size:9.3px;transform:scaleX(0.8755);">VGADefinitions.h</div>
<div class="t" style="left:91.65px;top:158px;font-size:9.3px;transform:scaleX(0.8132);">BasicVGAControllerMSVC</div>
<div class="t" style="left:106.25px;top:171px;font-size:9.3px;transform:scaleX(0.8595);">BasicVGAController.h</div>
<div class="t" style="left:106.25px;top:185px;font-size:9.3px;transform:scaleX(0.8791);">BasicVGAController.lib</div>
<div class="t" style="left:91.65px;top:198px;font-size:9.3px;transform:scaleX(0.8758);">freeglutMSVC</div>
<div class="t" style="left:106.55px;top:211px;font-size:9.3px;transform:scaleX(0.9465);">freeglut.h</div>
<div class="t" style="left:106.55px;top:224px;font-size:9.3px;transform:scaleX(0.9159);">freeglut.lib</div>
<div class="t" style="left:91.65px;top:237px;font-size:9.3px;transform:scaleX(0.8448);">OpenGL</div>
<div class="t" style="left:106.25px;top:250px;font-size:9.3px;transform:scaleX(0.9080);">dummy.h</div>
<div class="t" style="left:106.25px;top:264px;font-size:9.3px;transform:scaleX(0.9018);">libopengl32.a</div>
<div class="t" style="left:87.25px;top:277px;font-size:9.3px;transform:scaleX(0.8920);">libSimtek Clock</div>
</div></div>
<div class="a" style="left:176.6px;top:103.6px;width:13.6px;height:190.6px;background:#f4f3ec;"></div>
<div class="a" style="left:176.6px;top:103.6px;width:11.4px;height:176.8px;background:linear-gradient(90deg,#f1f0e8,#fbfbf8);"></div>
<div class="a" style="left:177px;top:105.4px;width:10.6px;height:10.8px;background:linear-gradient(135deg,#d6e2fc,#b6c9f5);border:1px solid #a9bcec;border-radius:2px"></div>
<svg style="left:182.3px;top:110.80000000000001px" width="1" height="1"><path d="M-2.600 1.300L0 -1.300L2.600 1.300" fill="none" stroke="#3d5a9c" stroke-width="1.700"/></svg>
<div class="a" style="left:177px;top:117.2px;width:10.6px;height:74.2px;background:linear-gradient(90deg,#cbd9fb,#bccdf7 60%,#aec1f0);border:1px solid #a9bcec;border-radius:2px"></div>
<div class="a" style="left:180.3px;top:151.9px;width:4px;height:0.8px;background:#93a8dc;"></div>
<div class="a" style="left:180.3px;top:153.9px;width:4px;height:0.8px;background:#93a8dc;"></div>
<div class="a" style="left:180.3px;top:155.9px;width:4px;height:0.8px;background:#93a8dc;"></div>
<div class="a" style="left:177px;top:267.4px;width:10.6px;height:10.8px;background:linear-gradient(135deg,#d6e2fc,#b6c9f5);border:1px solid #a9bcec;border-radius:2px"></div>
<svg style="left:182.3px;top:272.79999999999995px" width="1" height="1"><path d="M-2.600 -1.300L0 1.300L2.600 -1.300" fill="none" stroke="#3d5a9c" stroke-width="1.700"/></svg>
<div class="a" style="left:13.8px;top:280.4px;width:162.8px;height:13.8px;background:linear-gradient(#f1f0e8,#fbfbf8);"></div>
<div class="a" style="left:16.8px;top:281.4px;width:10.4px;height:10.8px;background:linear-gradient(135deg,#d6e2fc,#b6c9f5);border:1px solid #a9bcec;border-radius:2px"></div>
<svg style="left:22.0px;top:286.79999999999995px" width="1" height="1"><path d="M1.300 -2.600L-1.300 0L1.300 2.600" fill="none" stroke="#3d5a9c" stroke-width="1.700"/></svg>
<div class="a" style="left:29px;top:281.4px;width:91.6px;height:10.8px;background:linear-gradient(#cbd9fb,#bccdf7 60%,#aec1f0);border:1px solid #a9bcec;border-radius:2px"></div>
<div class="a" style="left:72.4px;top:284.79999999999995px;width:0.8px;height:4px;background:#93a8dc;"></div>
<div class="a" style="left:74.4px;top:284.79999999999995px;width:0.8px;height:4px;background:#93a8dc;"></div>
<div class="a" style="left:76.4px;top:284.79999999999995px;width:0.8px;height:4px;background:#93a8dc;"></div>
<div class="a" style="left:163.5px;top:281.4px;width:10.4px;height:10.8px;background:linear-gradient(135deg,#d6e2fc,#b6c9f5);border:1px solid #a9bcec;border-radius:2px"></div>
<svg style="left:168.7px;top:286.79999999999995px" width="1" height="1"><path d="M-1.300 -2.600L1.300 0L-1.300 2.600" fill="none" stroke="#3d5a9c" stroke-width="1.700"/></svg>
<div class="a" style="left:195.2px;top:64px;width:921.2px;height:233.0px;border:1px solid #b9b5a2;border-radius:5px 5px 0 0;background:#ece9d8"></div>
<div class="a" style="left:196.2px;top:82.2px;width:919.2px;height:213.8px;background:#ece9d8;"></div>
<div class="a" style="left:196.2px;top:82.2px;width:919.2px;height:0.9px;background:#c5c1ae;"></div>
<div class="a" style="left:195.7px;top:65.3px;width:61.4px;height:18px;background:#fff;border:1px solid #b9b5a2;border-bottom:0;border-radius:4px 6px 0 0"></div>
<svg style="left:199.6px;top:68.8px" width="9" height="8.6" viewBox="0 0 9 8.6"><rect x="0.500" y="0.500" width="8" height="7.6" fill="#fff" stroke="#7f91b3" stroke-width="1"/><rect x="1" y="1" width="7" height="2" fill="#6f9be0"/><rect x="1" y="3" width="7" height="4.6" fill="#eaf3fb"/></svg>
<div class="t" style="left:213.05px;top:68px;font-size:9.3px;transform:scaleX(0.9550);">jpeg.h</div>
<svg style="left:243.3px;top:69.4px" width="8.4" height="8.4" viewBox="0 0 8.4 8.4"><path d="M0.600 2.200L2.200 0.600L4.200 2.600L6.200 0.600L7.800 2.200L5.800 4.200L7.800 6.200L6.200 7.800L4.200 5.800L2.200 7.800L0.600 6.200L2.600 4.200z" fill="#fbfbfb" stroke="#8c8c8c" stroke-width="0.900" stroke-linejoin="round"/></svg>
<div class="a" style="left:1089.8px;top:67.9px;width:8px;height:2.8px;border:1px solid #8a8a82;background:#fff"></div>
<div class="a" style="left:1103.6px;top:67.9px;width:8px;height:7.6px;border:1px solid #8a8a82;border-top-width:2px;background:#fff"></div>
<div class="a" style="left:196.4px;top:83.4px;width:918.4px;height:212.4px;background:#fff;"></div>
<div class="a" style="left:196.4px;top:83.4px;width:10.6px;height:212.4px;background:#efecdf;"></div>
<div class="a" style="left:214.6px;top:84.3px;width:876.6px;height:12.8px;background:#e8f2fe;"></div>
<div class="a" style="left:1104.2px;top:83.4px;width:10.8px;height:212.4px;background:#ece9d8;"></div>
<div class="code" style="top:87px"><span class="c">///////////////////////////////////////////////////////////////////////////////</span></div>
<div class="code" style="top:100px"><span class="c">//</span></div>
<div class="code" style="top:113px"><span class="c">//  jpeg.h</span></div>
<div class="code" style="top:126px"><span class="c">//</span></div>
<div class="code" style="top:139px"><span class="c">///////////////////////////////////////////////////////////////////////////////</span></div>
<div class="code" style="top:152px"><span class="k">#ifndef</span> JPEG_H_</div>
<div class="code" style="top:166px"><span class="k">#define</span> JPEG_H_</div>
<div class="code" style="top:192px"><span class="k">#define</span> ROUND_UP(val, round) ((val+(round)-1)/(round)*(round))</div>
<div class="code" style="top:205px"><span class="k">#define</span> BLOCK_WIDTH 8</div>
<div class="code" style="top:218px"><span class="k">#define</span> BLOCK_HEIGHT 8</div>
<div class="code" style="top:231px"><span class="k">#define</span> BLOCK_SIZE (BLOCK_WIDTH*BLOCK_HEIGHT)</div>
<div class="code" style="top:257px"><span class="c">// Marker</span></div>
<div class="code" style="top:270px"><span class="k">#define</span> SOI_MK  0xFFD8      <span class="c">/* start of image   */</span></div>
<div class="a" style="left:1091.2px;top:83.4px;width:13px;height:197.6px;background:linear-gradient(90deg,#f1f0e8,#fdfdfb);"></div>
<div class="a" style="left:1091.7px;top:85.2px;width:11.8px;height:11.8px;background:linear-gradient(135deg,#d6e2fc,#b6c9f5);border:1px solid #a9bcec;border-radius:2px"></div>
<svg style="left:1097.6000000000001px;top:91.10000000000001px" width="1" height="1"><path d="M-2.600 1.300L0 -1.300L2.600 1.300" fill="none" stroke="#3d5a9c" stroke-width="1.700"/></svg>
<div class="a" style="left:1091.7px;top:98.6px;width:11.8px;height:57.8px;background:linear-gradient(90deg,#cbd9fb,#bccdf7 60%,#aec1f0);border:1px solid #a9bcec;border-radius:2px"></div>
<div class="a" style="left:1095.6000000000001px;top:125.1px;width:4px;height:0.8px;background:#93a8dc;"></div>
<div class="a" style="left:1095.6000000000001px;top:127.1px;width:4px;height:0.8px;background:#93a8dc;"></div>
<div class="a" style="left:1095.6000000000001px;top:129.1px;width:4px;height:0.8px;background:#93a8dc;"></div>
<div class="a" style="left:1091.7px;top:269.5px;width:11.8px;height:11.4px;background:linear-gradient(135deg,#d6e2fc,#b6c9f5);border:1px solid #a9bcec;border-radius:2px"></div>
<svg style="left:1097.6000000000001px;top:275.2px" width="1" height="1"><path d="M-2.600 -1.300L0 1.300L2.600 -1.300" fill="none" stroke="#3d5a9c" stroke-width="1.700"/></svg>
<div class="a" style="left:207px;top:281px;width:884.2px;height:13.8px;background:linear-gradient(#f3f2ea,#fdfdfb);"></div>
<div class="a" style="left:1091.2px;top:281px;width:13px;height:13.8px;background:#ece9d8;"></div>
<div class="a" style="left:213.3px;top:281.8px;width:12.6px;height:12.2px;background:#f1efe6;border:1px solid #e8e5da;border-radius:2px"></div>
<svg style="left:219.60000000000002px;top:287.90000000000003px" width="1" height="1"><path d="M1.300 -2.600L-1.300 0L1.300 2.600" fill="none" stroke="#cfccbf" stroke-width="1.700"/></svg>
<div class="a" style="left:1079.9px;top:281.8px;width:11.4px;height:12.2px;background:#f1efe6;border:1px solid #e8e5da;border-radius:2px"></div>
<svg style="left:1085.6000000000001px;top:287.90000000000003px" width="1" height="1"><path d="M-1.300 -2.600L1.300 0L-1.300 2.600" fill="none" stroke="#cfccbf" stroke-width="1.700"/></svg>
<div class="a" style="left:11.7px;top:299.2px;width:1104.7px;height:353.8px;border:1px solid #b9b5a2;border-radius:5px 5px 0 0;background:#ece9d8"></div>
<div class="a" style="left:12.7px;top:317.2px;width:1102.7px;height:1px;background:#d3cfbe;"></div>
<div class="a" style="left:12.7px;top:318.4px;width:1102.7px;height:1.2px;background:#fbfaf6;"></div>
<div class="a" style="left:107.2px;top:300px;width:88.6px;height:18.6px;background:#fff;border:1px solid #b9b5a2;border-bottom:0;border-radius:2px 3px 0 0"></div>
<div class="a" style="left:54.6px;top:300.4px;width:1px;height:17px;background:#c9c5b2;"></div>
<svg style="left:14.2px;top:299.8px" width="17" height="17" viewBox="0 0 17 17"><rect x="0.500" y="0.500" width="16" height="16" fill="#77757a"/><rect x="0.500" y="0.500" width="16" height="2.400" fill="#6b4d8c"/><rect x="1.600" y="3.200" width="13.800" height="7.400" fill="#0c0c0c"/><path d="M3 6.200l1.200-1.600l1.200 1.600l1.200-1.600l1.200 1.600l1.200-1.600l1.200 1.600l1.200-1.600l1.200 1.600" fill="none" stroke="#f2f2f2" stroke-width="0.900"/><path d="M6.600 8.200h3.800v3.800h2.600l-4.500 4.400l-4.500-4.400h2.600z" fill="#4a9be8" stroke="#2b6cc0" stroke-width="0.500"/><rect x="14.600" y="0.800" width="1.200" height="1.200" fill="#fff"/></svg>
<svg style="left:57.3px;top:299.8px" width="17" height="17" viewBox="0 0 17 17"><rect x="0.500" y="0.500" width="16" height="16" fill="#858388"/><rect x="0.500" y="0.500" width="16" height="2.400" fill="#7b6a95"/><rect x="1.800" y="3.400" width="13.400" height="11.800" fill="#080808"/><g fill="none" stroke="#f0f0f0" stroke-width="0.900"><path d="M3.200 6.200q1.300-1.400 2.600 0t2.600 0t2.600 0t2.600 0"/><path d="M3.200 9.400q1.300-1.400 2.600 0t2.600 0t2.600 0t2.600 0"/><path d="M3.200 12.600q1.300-1.400 2.600 0t2.600 0t2.600 0t2.600 0"/></g></svg>
<svg style="left:110px;top:302.4px" width="18" height="16" viewBox="0 0 18 16"><g fill="none" stroke="#111" stroke-width="1.100"><path d="M0.500 3.400h5.500l3.500 4h4"/><path d="M0.500 6h4l3 4.200h6"/><path d="M0.500 8.600h2.500v7"/><path d="M3 8.600l3.500 4.600h7"/></g><rect x="12" y="2.200" width="3" height="2.600" fill="#111"/><rect x="12.400" y="6" width="3" height="2.600" fill="#c22"/><rect x="12.400" y="9.200" width="3" height="2.400" fill="#111"/><rect x="12.400" y="12.200" width="3" height="2.400" fill="#c22"/></svg>
<div class="t" style="left:33.65px;top:303px;font-size:9.3px;transform:scaleX(0.8559);">Build</div>
<div class="t" style="left:76.85px;top:303px;font-size:9.3px;transform:scaleX(0.9313);">Output</div>
<div class="t" style="left:131.35px;top:303px;font-size:9.3px;transform:scaleX(0.8707);">System Map</div>
<svg style="left:182.6px;top:305.2px" width="8.4" height="8.4" viewBox="0 0 8.4 8.4"><path d="M0.600 2.200L2.200 0.600L4.200 2.600L6.200 0.600L7.800 2.200L5.800 4.200L7.800 6.200L6.200 7.800L4.200 5.800L2.200 7.800L0.600 6.200L2.600 4.200z" fill="#fbfbfb" stroke="#8c8c8c" stroke-width="0.900" stroke-linejoin="round"/></svg>
<div class="t" style="left:833.25px;top:303px;font-size:9.3px;transform:scaleX(0.9078);">Orientation</div>
<div class="t" style="left:889.55px;top:303px;font-size:9.3px;transform:scaleX(0.9640);">Autofit Off</div>
<div class="t" style="left:944.15px;top:303px;font-size:9.3px;transform:scaleX(0.8966);">Zoom +</div>
<div class="t" style="left:987.35px;top:303px;font-size:9.3px;transform:scaleX(0.8624);">Zoom -</div>
<div class="t" style="left:1027.55px;top:303px;font-size:9.3px;transform:scaleX(0.9290);">Save As...</div>
<div class="a" style="left:881.8px;top:301.6px;width:1px;height:16px;background:#d6d2c2;"></div>
<div class="a" style="left:882.8px;top:301.6px;width:1px;height:16px;background:#f6f5ee;"></div>
<div class="a" style="left:936.8px;top:301.6px;width:1px;height:16px;background:#d6d2c2;"></div>
<div class="a" style="left:937.8px;top:301.6px;width:1px;height:16px;background:#f6f5ee;"></div>
<div class="a" style="left:979.6px;top:301.6px;width:1px;height:16px;background:#d6d2c2;"></div>
<div class="a" style="left:980.6px;top:301.6px;width:1px;height:16px;background:#f6f5ee;"></div>
<div class="a" style="left:1020px;top:301.6px;width:1px;height:16px;background:#d6d2c2;"></div>
<div class="a" style="left:1021px;top:301.6px;width:1px;height:16px;background:#f6f5ee;"></div>
<svg style="left:1075.3px;top:302.9px" width="7.4" height="4.4" viewBox="0 0 7.4 4.4"><path d="M0.600 0.500h6.200L3.700 3.800z" fill="#f6f5ee" stroke="#8f8c7f" stroke-width="0.800"/></svg>
<div class="a" style="left:1089.8px;top:302.9px;width:8px;height:2.8px;border:1px solid #8a8a82;background:#fff"></div>
<div class="a" style="left:1103.6px;top:302.9px;width:8px;height:7.6px;border:1px solid #8a8a82;border-top-width:2px;background:#fff"></div>
<div class="a" style="left:13.3px;top:319.4px;width:1102.3px;height:332.4px;background:#f4f3ec;border:1px solid #d9d6c8"></div>
<div class="a" style="left:14.8px;top:320.8px;width:1084.8px;height:329px;background:#6a8af7;"></div>
<div class="a" style="left:1101.6px;top:320.8px;width:12.6px;height:329px;background:linear-gradient(90deg,#f1f0e8,#fdfdfb);"></div>
<div class="a" style="left:1102.6px;top:321.8px;width:10.6px;height:10.6px;background:linear-gradient(135deg,#d6e2fc,#b6c9f5);border:1px solid #a9bcec;border-radius:2px"></div>
<svg style="left:1107.8999999999999px;top:327.1px" width="1" height="1"><path d="M-2.600 1.300L0 -1.300L2.600 1.300" fill="none" stroke="#3d5a9c" stroke-width="1.700"/></svg>
<div class="a" style="left:1102.6px;top:333.6px;width:10.6px;height:277.6px;background:linear-gradient(90deg,#cbd9fb,#bccdf7 60%,#aec1f0);border:1px solid #a9bcec;border-radius:2px"></div>
<div class="a" style="left:1105.8999999999999px;top:470.0px;width:4px;height:0.8px;background:#93a8dc;"></div>
<div class="a" style="left:1105.8999999999999px;top:472.0px;width:4px;height:0.8px;background:#93a8dc;"></div>
<div class="a" style="left:1105.8999999999999px;top:474.0px;width:4px;height:0.8px;background:#93a8dc;"></div>
<div class="a" style="left:1102.6px;top:638.2px;width:10.6px;height:10.6px;background:linear-gradient(135deg,#d6e2fc,#b6c9f5);border:1px solid #a9bcec;border-radius:2px"></div>
<svg style="left:1107.8999999999999px;top:643.5px" width="1" height="1"><path d="M-2.600 -1.300L0 1.300L2.600 -1.300" fill="none" stroke="#3d5a9c" stroke-width="1.700"/></svg>
<div class="a" style="left:45.3px;top:417.3px;width:487.2px;height:23.3px;background:#000;"></div>
<div class="t" style="left:258.75px;top:424.4px;font-size:7.2px;letter-spacing:-0.160px;color:#fff;-webkit-text-stroke:0">AMBA_AXIBus1</div>
<div class="a" style="left:146px;top:395.6px;width:2px;height:21.7px;background:#000;"></div>
<div class="a" style="left:287px;top:395.5px;width:2px;height:21.8px;background:#000;"></div>
<div class="a" style="left:427px;top:395.3px;width:2px;height:22.0px;background:#000;"></div>
<div class="a" style="left:238px;top:439.6px;width:2px;height:23.4px;background:#000;"></div>
<div class="a" style="left:471px;top:439.6px;width:2px;height:23.4px;background:#000;"></div>
<div class="bx" style="left:107.6px;top:350.7px;width:79.1px;height:45.8px;background:#008b8b"></div>
<div class="t" style="left:116.15px;top:354.9px;font-size:6.6px;letter-spacing:1.071px;color:#fff;font-weight:bold;-webkit-text-stroke:0">W</div>
<div class="t" style="left:107.55px;top:368.3px;font-size:7.2px;letter-spacing:-0.128px;color:#fff;-webkit-text-stroke:0">VGA_CONTROLLER1</div>
<div class="bx" style="left:248.6px;top:350.6px;width:78.4px;height:45.9px;background:#000082"></div>
<div class="t" style="left:262.55px;top:368.0px;font-size:7.2px;letter-spacing:0.190px;color:#fff;-webkit-text-stroke:0">XilinxBRAM2</div>
<div class="bx" style="left:389.3px;top:366.3px;width:79.0px;height:30.0px;background:#008000"></div>
<div class="t" style="left:408.55px;top:376.0px;font-size:7.2px;letter-spacing:0.349px;color:#fff;-webkit-text-stroke:0">XilinxPIC1</div>
<div class="bx" style="left:432.5px;top:463px;width:78.3px;height:30.0px;background:#008000"></div>
<div class="t" style="left:447.25px;top:472.5px;font-size:7.2px;letter-spacing:0.088px;color:#fff;-webkit-text-stroke:0">ISSAdapter1</div>
<div class="bx" style="left:67px;top:462.8px;width:344.4px;height:181.2px;background:#008000"></div>
<div class="t" style="left:210.65px;top:466.8px;font-size:7.2px;letter-spacing:0.099px;color:#d6ecd6;-webkit-text-stroke:0">armCortexA91</div>
<div class="bx" style="left:93.7px;top:490.7px;width:78.9px;height:45.3px;background:#7b0022"></div>
<div class="t" style="left:100.55px;top:493.8px;font-size:5.9px;letter-spacing:0.548px;color:#fff;font-weight:bold;-webkit-text-stroke:0">SW</div>
<div class="t" style="left:116.45px;top:507.6px;font-size:7.2px;letter-spacing:-0.268px;color:#fff;-webkit-text-stroke:0">DEMUX1</div>
<div class="bx" style="left:199.7px;top:490.7px;width:78.9px;height:45.3px;background:#7b0022"></div>
<div class="t" style="left:206.55px;top:493.8px;font-size:5.9px;letter-spacing:0.548px;color:#fff;font-weight:bold;-webkit-text-stroke:0">SW</div>
<div class="t" style="left:227.55px;top:507.6px;font-size:7.2px;letter-spacing:-0.160px;color:#fff;-webkit-text-stroke:0">IDCT1</div>
<div class="bx" style="left:305.1px;top:490.7px;width:78.9px;height:45.3px;background:#7b0022"></div>
<div class="t" style="left:311.95px;top:493.8px;font-size:5.9px;letter-spacing:0.548px;color:#fff;font-weight:bold;-webkit-text-stroke:0">SW</div>
<div class="t" style="left:333.25px;top:507.6px;font-size:7.2px;letter-spacing:0.040px;color:#fff;-webkit-text-stroke:0">IQZZ1</div>
<div class="bx" style="left:93.7px;top:548.8px;width:78.9px;height:45.3px;background:#7b0022"></div>
<div class="t" style="left:100.55px;top:551.9px;font-size:5.9px;letter-spacing:0.548px;color:#fff;font-weight:bold;-webkit-text-stroke:0">SW</div>
<div class="t" style="left:120.85px;top:565.7px;font-size:7.2px;letter-spacing:0.238px;color:#fff;-webkit-text-stroke:0">LIBU1</div>
<div class="bx" style="left:199.7px;top:548.8px;width:78.9px;height:45.3px;background:#7b0022"></div>
<div class="t" style="left:206.55px;top:551.9px;font-size:5.9px;letter-spacing:0.548px;color:#fff;font-weight:bold;-webkit-text-stroke:0">SW</div>
<div class="t" style="left:228.05px;top:565.7px;font-size:7.2px;letter-spacing:0.097px;color:#fff;-webkit-text-stroke:0">VLD1</div>
<div class="bx" style="left:93.7px;top:607px;width:290.2px;height:18.2px;background:#d8d512"></div>
<div class="t" style="left:221.75px;top:610.5px;font-size:7.2px;letter-spacing:0.362px;color:#f1eeb0;-webkit-text-stroke:0">uC/OS-II</div>
</div></body></html>
